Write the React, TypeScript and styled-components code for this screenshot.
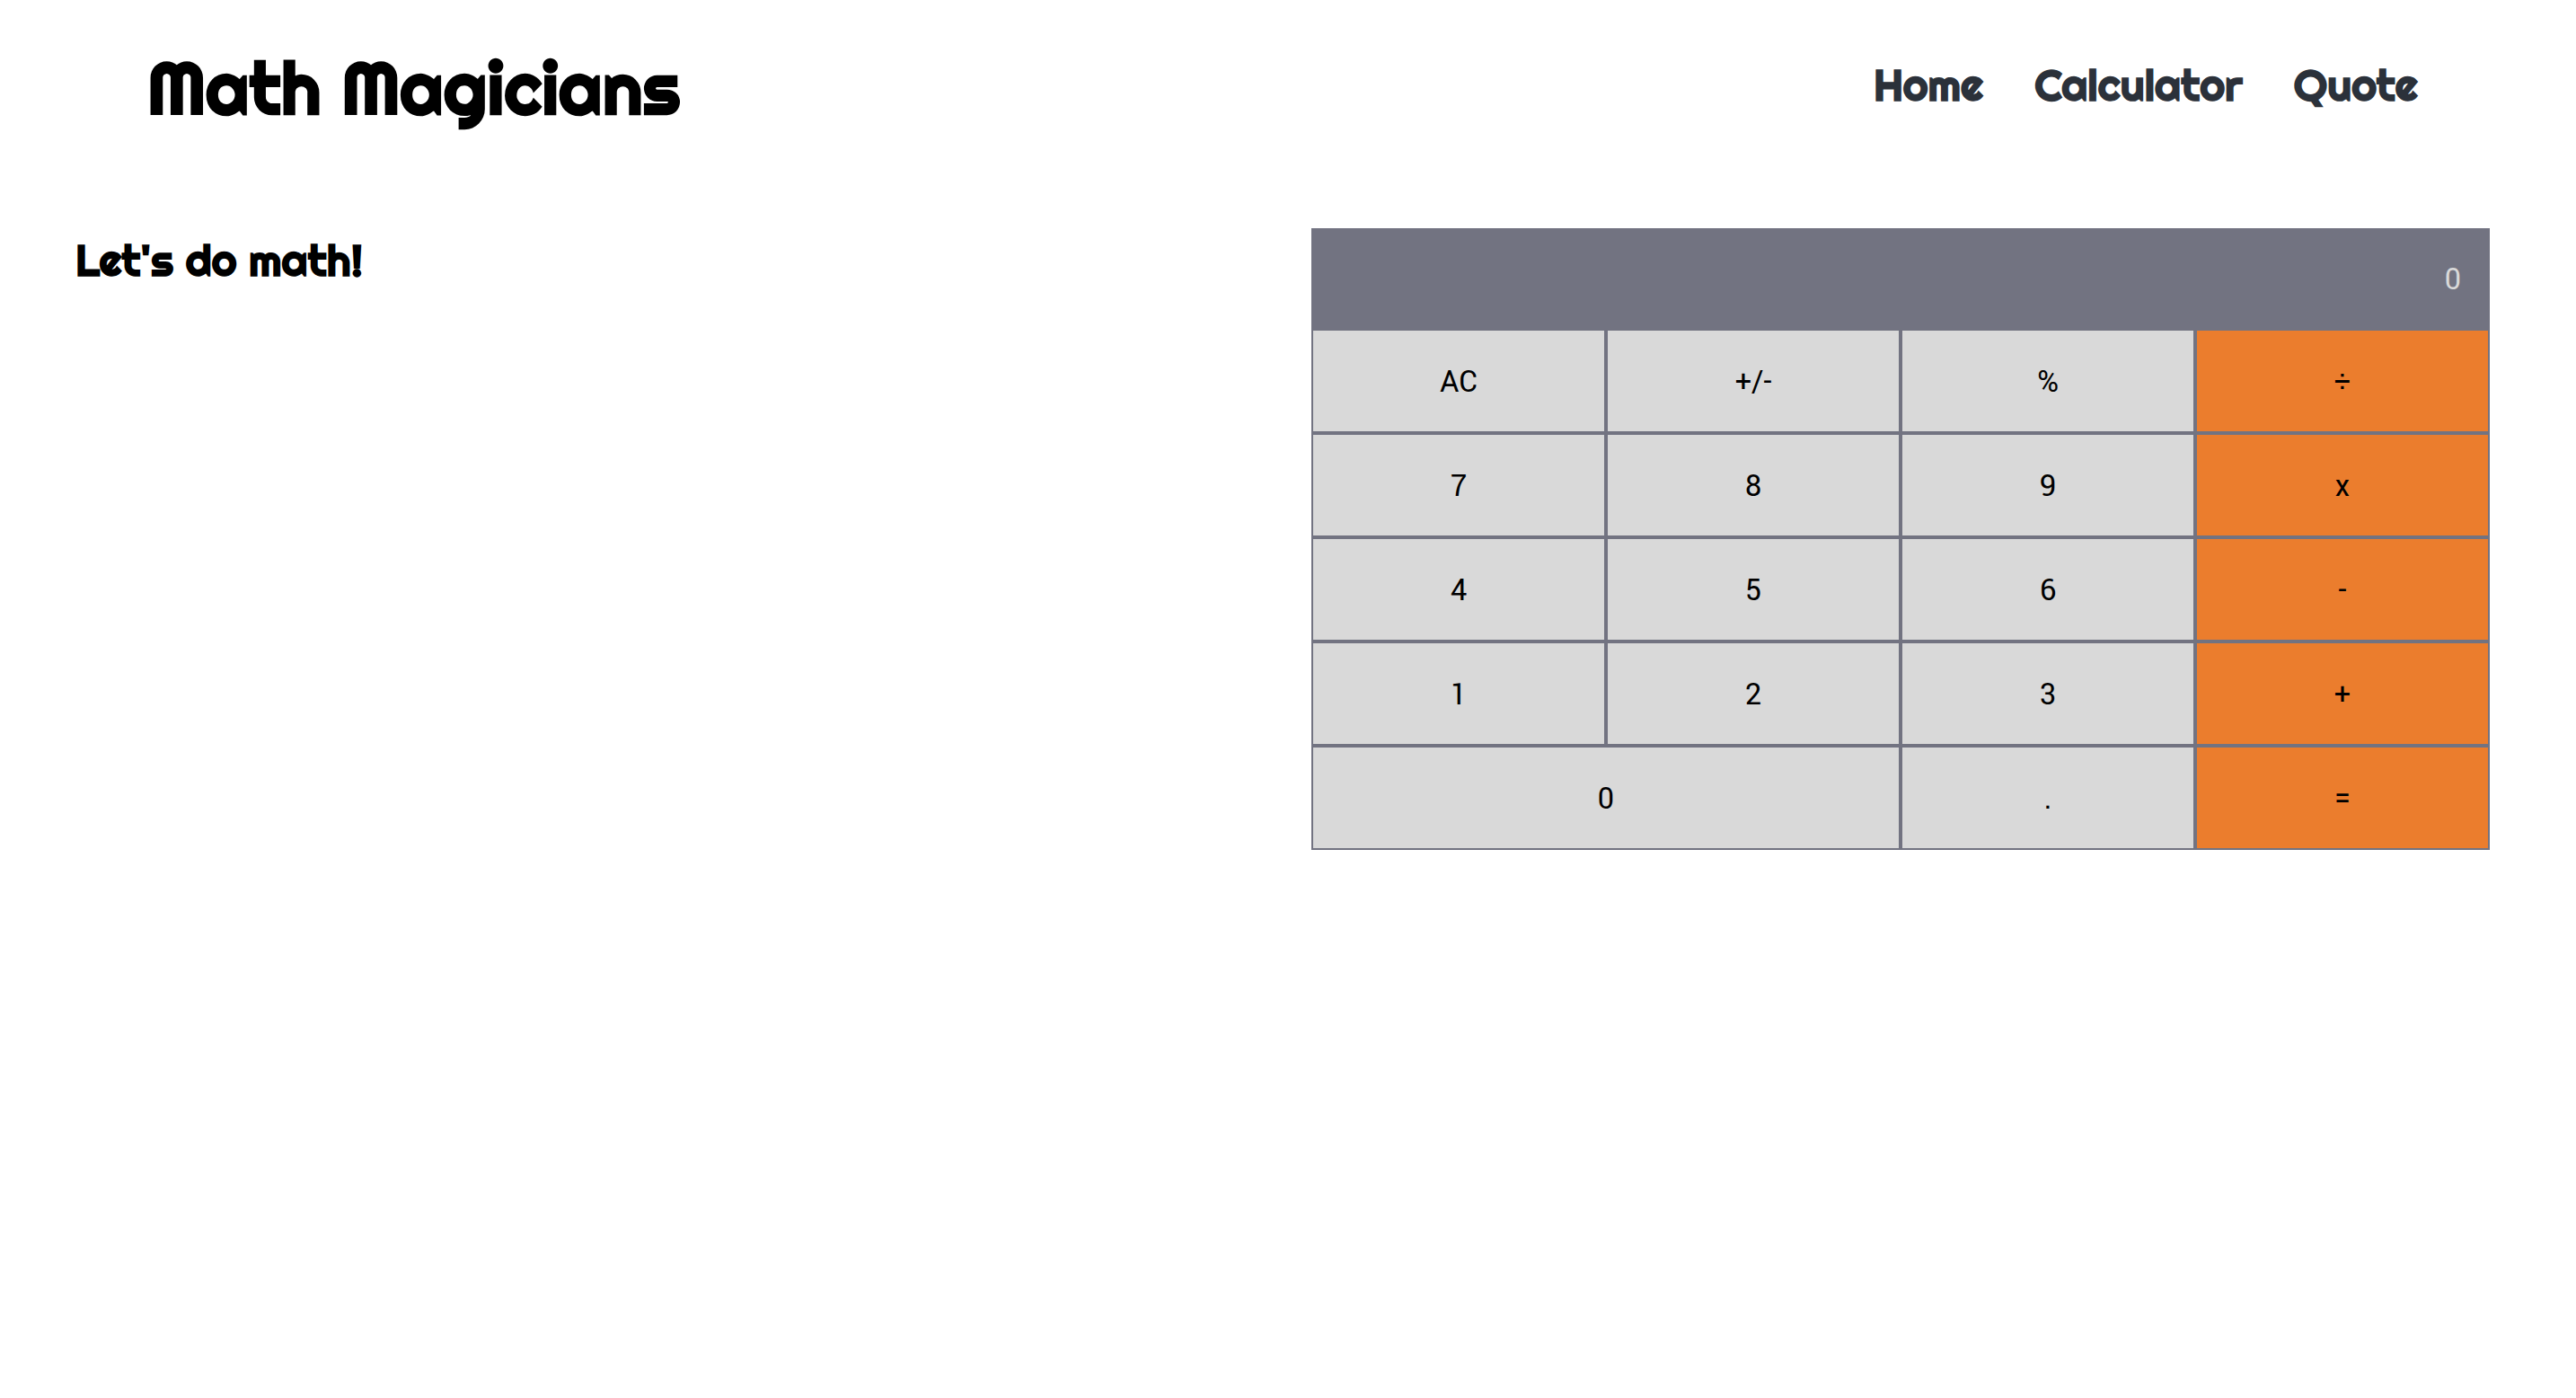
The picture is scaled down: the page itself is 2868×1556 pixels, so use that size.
import { useState } from 'react';
import styled, { createGlobalStyle } from 'styled-components';

const GlobalStyle = createGlobalStyle`
  *, *::before, *::after {
    box-sizing: border-box;
  }
  body {
    margin: 0;
    background: #fff;
    color: #000;
    font-family: Righteous, Lato, sans-serif;
  }
`;

const Header = styled.header`
  display: flex;
  justify-content: space-between;
  align-items: flex-start;
  padding: 48px 176px 0 164px;
`;

const Title = styled.h1`
  margin: 0;
  font-size: 80px;
  line-height: 100px;
  font-weight: 700;
`;

const Nav = styled.nav`
  display: flex;
  gap: 57px;
  padding-top: 17px;
`;

const NavLink = styled.a`
  color: #2b313a;
  font-size: 48px;
  line-height: 60px;
  font-weight: 700;
  text-decoration: none;
`;

const Main = styled.main`
  display: grid;
  grid-template-columns: 1fr 1fr;
  align-items: start;
  gap: 64px;
  padding: 106px 96px 0 84px;
`;

const Tagline = styled.h2`
  margin: 6px 0 0;
  font-size: 48px;
  line-height: 60px;
  font-weight: 700;
`;

const Calculator = styled.section`
  display: grid;
  grid-template-columns: repeat(4, 1fr);
  grid-template-rows: 112px;
  grid-auto-rows: 116px;
  font-family: Yantramanav, Roboto, sans-serif;
  font-size: 36px;
  font-weight: 400;
`;

const Display = styled.output`
  grid-column: 1 / -1;
  display: flex;
  align-items: center;
  justify-content: flex-end;
  padding: 2px 32px 0;
  background: #727381;
  color: #d9d9d9;
`;

const Key = styled.button<{ $operator?: boolean; $wide?: boolean }>`
  grid-column: span ${({ $wide }) => ($wide ? 2 : 1)};
  padding: 2px 0 0;
  border: 2px solid #727381;
  border-radius: 0;
  background: ${({ $operator }) => ($operator ? '#eb7d2d' : '#d9d9d9')};
  color: #000;
  font: inherit;
  cursor: pointer;
`;

const keys = [
  'AC', '+/-', '%', '÷',
  '7', '8', '9', 'x',
  '4', '5', '6', '-',
  '1', '2', '3', '+',
  '0', '.', '=',
];
const operators = ['÷', 'x', '-', '+', '='];

type State = { value: string; stored: number | null; pending: string | null; fresh: boolean };
const initial: State = { value: '0', stored: null, pending: null, fresh: true };

function compute(a: number, b: number, op: string) {
  if (op === '+') return a + b;
  if (op === '-') return a - b;
  if (op === 'x') return a * b;
  return a / b;
}

function press(state: State, key: string): State {
  const { value, stored, pending, fresh } = state;
  if (key === 'AC') return initial;
  if (key === '+/-') return { ...state, value: String(-Number(value)) };
  if (key === '%') return { ...state, value: String(Number(value) / 100) };
  if (operators.includes(key)) {
    const current = Number(value);
    const result = stored !== null && pending && !fresh ? compute(stored, current, pending) : current;
    return { value: String(result), stored: result, pending: key === '=' ? null : key, fresh: true };
  }
  if (key === '.') {
    if (fresh) return { ...state, value: '0.', fresh: false };
    return value.includes('.') ? state : { ...state, value: value + '.' };
  }
  return { ...state, value: fresh || value === '0' ? key : value + key, fresh: false };
}

export default function App() {
  const [state, setState] = useState<State>(initial);

  return (
    <>
      <GlobalStyle />
      <Header>
        <Title>Math Magicians</Title>
        <Nav aria-label="Main">
          <NavLink href="#home">Home</NavLink>
          <NavLink href="#calculator">Calculator</NavLink>
          <NavLink href="#quote">Quote</NavLink>
        </Nav>
      </Header>
      <Main>
        <Tagline>Let's do math!</Tagline>
        <Calculator aria-label="Calculator">
          <Display>{state.value}</Display>
          {keys.map((key) => (
            <Key
              key={key}
              type="button"
              $operator={operators.includes(key)}
              $wide={key === '0'}
              onClick={() => setState((s) => press(s, key))}
            >
              {key}
            </Key>
          ))}
        </Calculator>
      </Main>
    </>
  );
}
